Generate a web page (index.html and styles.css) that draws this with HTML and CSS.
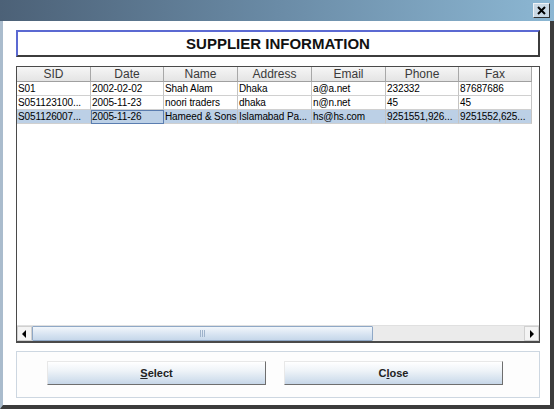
FILE: index.html
```html
<!DOCTYPE html>
<html>
<head>
<meta charset="utf-8">
<link rel="stylesheet" href="styles.css">
</head>
<body>
<div class="window">
  <div class="titlebar">
    <div class="close-btn"><svg width="11" height="9" viewBox="0 0 11 9"><path d="M2 1 L9 8 M9 1 L2 8" stroke="#000" stroke-width="2"/></svg></div>
  </div>
  <div class="client">
    <div class="heading">SUPPLIER INFORMATION</div>
    <div class="grid-box">
      <div class="grid">
        <div class="row head">
          <div class="hc">SID</div><div class="hc">Date</div><div class="hc">Name</div><div class="hc">Address</div><div class="hc">Email</div><div class="hc">Phone</div><div class="hc">Fax</div>
        </div>
        <div class="row">
          <div class="c">S01</div><div class="c">2002-02-02</div><div class="c">Shah Alam</div><div class="c">Dhaka</div><div class="c">a@a.net</div><div class="c">232332</div><div class="c">87687686</div>
        </div>
        <div class="row">
          <div class="c">S051123100...</div><div class="c">2005-11-23</div><div class="c">noori traders</div><div class="c">dhaka</div><div class="c">n@n.net</div><div class="c">45</div><div class="c">45</div>
        </div>
        <div class="row sel">
          <div class="c">S051126007...</div><div class="c focus">2005-11-26</div><div class="c">Hameed &amp; Sons</div><div class="c">Islamabad Pa...</div><div class="c">hs@hs.com</div><div class="c">9251551,926...</div><div class="c">9251552,625...</div>
        </div>
      </div>
      <div class="hscroll">
        <div class="sbtn"><svg width="5" height="8" viewBox="0 0 5 8"><path d="M4 0 L0 4 L4 8 Z" fill="#000"/></svg></div>
        <div class="track">
          <div class="thumb"><div class="grip"></div></div>
        </div>
        <div class="sbtn"><svg width="5" height="8" viewBox="0 0 5 8"><path d="M1 0 L5 4 L1 8 Z" fill="#000"/></svg></div>
      </div>
    </div>
    <div class="panel">
      <button class="btn"><u>S</u>elect</button>
      <button class="btn">C<u>l</u>ose</button>
    </div>
  </div>
</div>
</body>
</html>
```

FILE: styles.css
```css
html, body {
  margin: 0;
  padding: 0;
  background: #ffffff;
}
.window {
  width: 554px;
  height: 409px;
  box-sizing: border-box;
  display: flex;
  flex-direction: column;
  background: #ffffff;
  border-left: 3px solid #aabccd;
  border-right: 4px solid #3c3c3c;
  border-bottom: 4px solid #3c3c3c;
}
.titlebar {
  height: 21px;
  flex: none;
  margin-left: -3px;
  margin-right: -4px;
  background: linear-gradient(to right, #4c6177 0%, #6a8ba6 50%, #8cb7d3 100%);
  display: flex;
  justify-content: flex-end;
  align-items: center;
  padding-right: 4px;
}
.close-btn {
  width: 17px;
  height: 15px;
  box-sizing: border-box;
  background: #c9d8e4;
  border: 1px solid;
  border-color: #eef2f6 #303030 #303030 #eef2f6;
  display: flex;
  align-items: center;
  justify-content: center;
}
.client {
  flex: 1;
  display: flex;
  flex-direction: column;
  padding: 9px 10px 0 13px;
}
.heading {
  height: 27px;
  box-sizing: border-box;
  border: 2px solid;
  border-color: #5b69d2 #3c3c3c #3c3c3c #5b69d2;
  display: flex;
  align-items: center;
  justify-content: center;
  font-family: "Liberation Sans", Arial, sans-serif;
  font-weight: bold;
  font-size: 15px;
  color: #111;
}
.grid-box {
  margin-top: 9px;
  height: 277px;
  box-sizing: border-box;
  border: 1px solid #4a4a4a;
  border-bottom-width: 2px;
  display: flex;
  flex-direction: column;
  background: #fff;
}
.grid {
  flex: 1;
}
.row {
  display: grid;
  grid-template-columns: 74px 73px 74px 74px 74px 73px 73px;
  height: 14px;
}
.row.head {
  height: 15px;
}
.hc {
  background: linear-gradient(#f6f6f6, #e4e4e4);
  border-right: 1px solid #a8a8a8;
  border-bottom: 1px solid #a0a0a0;
  font-family: "Liberation Sans", Arial, sans-serif;
  font-size: 12px;
  color: #3a3a3a;
  text-align: center;
  line-height: 14px;
}
.c {
  border-right: 1px solid #c4c4c4;
  border-bottom: 1px solid #d0d0d0;
  font-family: "Liberation Sans", Tahoma, sans-serif;
  font-size: 10px;
  letter-spacing: -0.1px;
  line-height: 13px;
  color: #000;
  padding-left: 1px;
  white-space: nowrap;
  overflow: hidden;
}
.row.sel .c {
  background: #bcd0e6;
}
.row.sel .c.focus {
  outline: 1px solid #5a7db0;
  outline-offset: -1px;
}
.hscroll {
  height: 15px;
  display: flex;
  background: #ececec;
  border-top: 1px solid #e0e0e0;
}
.sbtn {
  width: 15px;
  flex: none;
  box-sizing: border-box;
  background: #f4f4f4;
  border: 1px solid #d0d0d0;
  display: flex;
  align-items: center;
  justify-content: center;
}
.track {
  flex: 1;
  display: flex;
  background: #ebebeb;
}
.thumb {
  width: 341px;
  box-sizing: border-box;
  border: 1px solid #8fa8c6;
  border-radius: 1px;
  background: linear-gradient(#f2f6fb, #d6e3f1 60%, #c6d7ea);
  display: flex;
  align-items: center;
  justify-content: center;
}
.grip {
  width: 5px;
  height: 7px;
  background: repeating-linear-gradient(to right, #9fb3cb 0 1px, transparent 1px 2px);
}
.panel {
  margin-top: 8px;
  height: 47px;
  box-sizing: border-box;
  border: 1px solid #cdd7e1;
  background: #fdfdfd;
  display: flex;
  justify-content: flex-start;
  align-items: flex-start;
  gap: 18px;
  padding: 9px 0 0 30px;
}
.btn {
  width: 219px;
  height: 24px;
  box-sizing: border-box;
  margin: 0;
  padding: 0;
  border: 1px solid;
  border-color: #e8e8e8 #6e6e6e #6e6e6e #e8e8e8;
  background: linear-gradient(#ffffff 0%, #eef3f8 40%, #d4e1ee 80%, #c6d6e7 100%);
  font-family: "Liberation Sans", Arial, sans-serif;
  font-weight: bold;
  font-size: 11px;
  color: #222;
}
```
